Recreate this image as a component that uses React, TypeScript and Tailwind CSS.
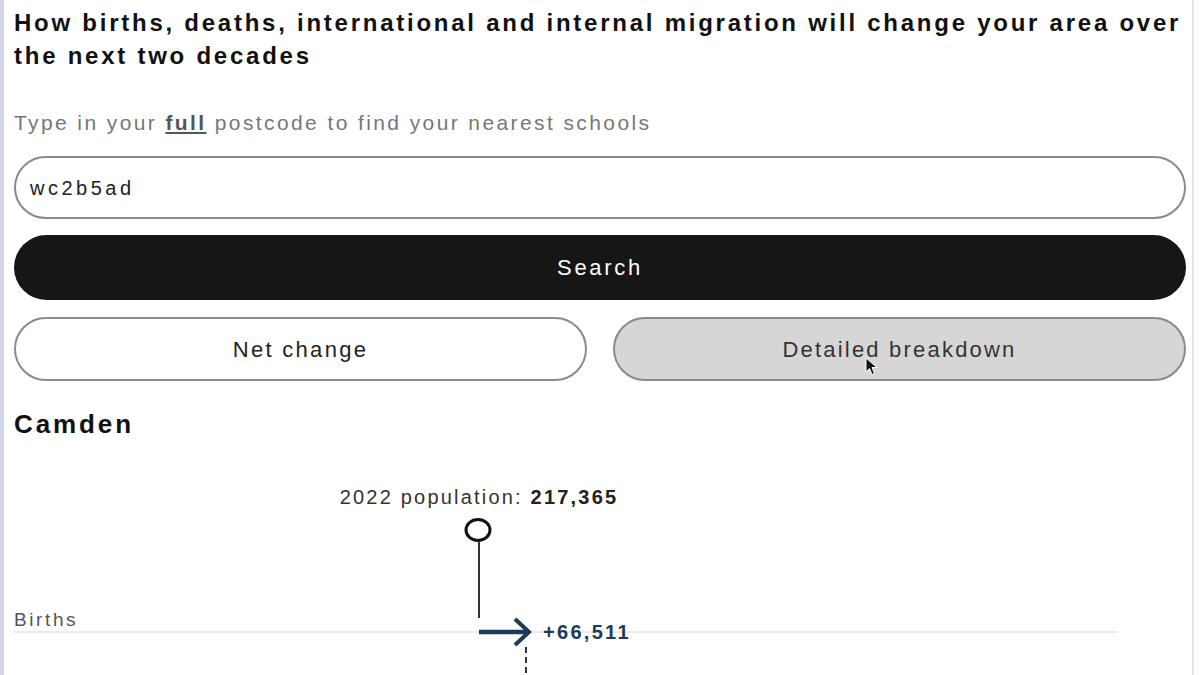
import React from "react";

const font = { fontFamily: '"Liberation Sans", Arial, Helvetica, sans-serif' };

function Chart() {
  const navy = "#1c3a5a";
  return (
    <svg width="1172" height="225" viewBox="0 0 1172 225" className="block" style={font}>
      <text x="465" y="54" textAnchor="middle" fontSize="20" fill="#333" letterSpacing="2.2">
        2022 population: <tspan fontWeight="bold" fill="#222">217,365</tspan>
      </text>
      <ellipse cx="464" cy="80" rx="12" ry="10.5" fill="white" stroke="#111" strokeWidth="3" />
      <line x1="465" y1="91" x2="465" y2="168" stroke="#333" strokeWidth="2" />
      <text x="0" y="176" fontSize="19" fill="#555" letterSpacing="2.6">Births</text>
      <line x1="0" y1="182" x2="1104" y2="182" stroke="#ececec" strokeWidth="2" />
      <line x1="465" y1="182" x2="514" y2="182" stroke={navy} strokeWidth="4.5" />
      <polyline points="501,169 515,182 501,195" fill="none" stroke={navy} strokeWidth="4" strokeLinejoin="miter" />
      <text x="529" y="189" fontSize="20" fontWeight="bold" fill={navy} letterSpacing="2.3">+66,511</text>
      <line x1="512" y1="197" x2="512" y2="225" stroke="#333" strokeWidth="2" strokeDasharray="6 4" />
    </svg>
  );
}

function Cursor() {
  return (
    <svg width="14" height="20" viewBox="0 0 14 20" className="absolute left-[865px] top-[357px]">
      <path d="M1 1 L1 15 L4.5 11.5 L7 17.5 L9.5 16.5 L7 10.5 L12 10.5 Z" fill="#111" stroke="white" strokeWidth="1" />
    </svg>
  );
}

export default function App() {
  return (
    <div className="relative flex h-[675px] w-[1200px] overflow-hidden bg-white" style={font}>
      <div className="w-[4px] shrink-0 bg-[#d0d5e6]" />
      <main className="flex w-[1182px] shrink-0 flex-col pl-[10px]">
        <h1 className="mt-[6px] text-[24px] font-bold leading-[33px] tracking-[2.75px] text-[#111]">
          How births, deaths, international and internal migration will change your area over the next two decades
        </h1>
        <p className="mt-[39px] text-[21px] leading-[24px] tracking-[2.4px] text-[#777]">
          Type in your <span className="font-bold text-[#555] underline underline-offset-2">full</span> postcode to find your nearest schools
        </p>
        <div className="mt-[21px] flex h-[63px] items-center rounded-full border-2 border-[#8a8a8a] px-[14px] text-[20px] tracking-[3.5px] text-[#222]">
          wc2b5ad
        </div>
        <button className="mt-[16px] h-[65px] rounded-full bg-[#161616] text-[22px] tracking-[2.7px] text-white">Search</button>
        <div className="mt-[17px] flex gap-[26px]">
          <button className="h-[64px] flex-1 rounded-full border-2 border-[#8a8a8a] bg-white text-[22px] tracking-[2.3px] text-[#222]">
            Net change
          </button>
          <button className="h-[64px] flex-1 rounded-full border-2 border-[#8a8a8a] bg-[#d6d6d6] text-[22px] tracking-[2.2px] text-[#333]">
            Detailed breakdown
          </button>
        </div>
        <h2 className="mt-[27px] text-[26px] font-bold leading-[32px] tracking-[2.9px] text-[#111]">Camden</h2>
        <div className="mt-[10px]">
          <Chart />
        </div>
      </main>
      <div className="ml-[6px] w-[2px] shrink-0 bg-[#e8e8e8]" />
      <Cursor />
    </div>
  );
}
